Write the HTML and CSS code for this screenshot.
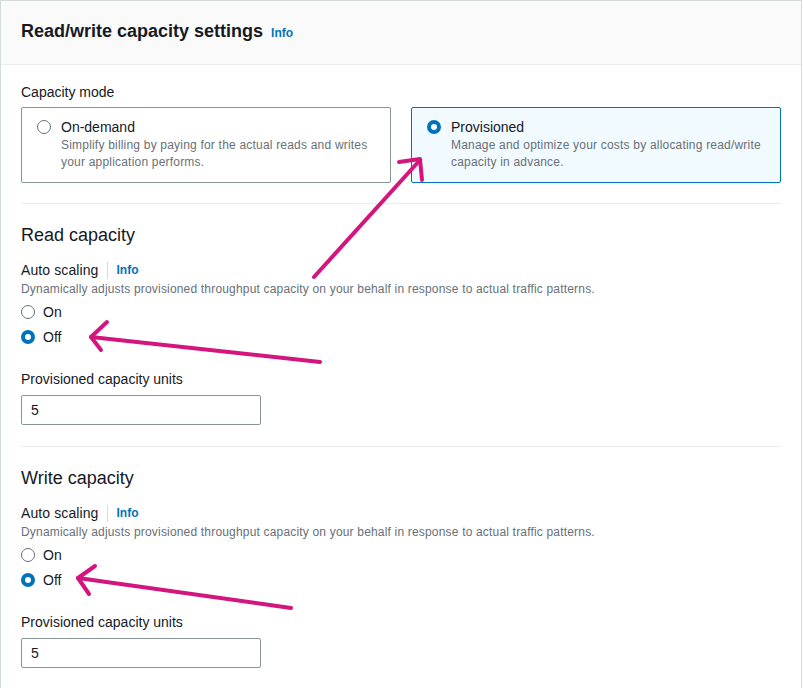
FILE: index.html
```html
<!DOCTYPE html>
<html lang="en">
<head>
<meta charset="utf-8">
<title>Read/write capacity settings</title>
<link rel="stylesheet" href="styles.css">
</head>
<body>
<div class="panel">
  <div class="panel-header">
    <h2 class="title">Read/write capacity settings</h2>
    <a class="info" href="#">Info</a>
  </div>
  <div class="panel-body">
    <div class="field-label">Capacity mode</div>
    <div class="tiles">
      <div class="tile">
        <span class="radio"></span>
        <div class="tile-text">
          <div class="tile-label">On-demand</div>
          <div class="tile-desc">Simplify billing by paying for the actual reads and writes your application performs.</div>
        </div>
      </div>
      <div class="tile tile-selected">
        <span class="radio radio-checked"></span>
        <div class="tile-text">
          <div class="tile-label">Provisioned</div>
          <div class="tile-desc">Manage and optimize your costs by allocating read/write capacity in advance.</div>
        </div>
      </div>
    </div>

    <div class="section">
      <h3 class="section-title">Read capacity</h3>
      <div class="label-row">
        <span class="label-text">Auto scaling</span>
        <span class="label-sep"></span>
        <a class="info" href="#">Info</a>
      </div>
      <div class="desc">Dynamically adjusts provisioned throughput capacity on your behalf in response to actual traffic patterns.</div>
      <div class="radio-group">
        <div class="radio-row"><span class="radio"></span><span>On</span></div>
        <div class="radio-row"><span class="radio radio-checked"></span><span>Off</span></div>
      </div>
      <div class="field-label units-label">Provisioned capacity units</div>
      <div class="input">5</div>
    </div>

    <div class="section">
      <h3 class="section-title">Write capacity</h3>
      <div class="label-row">
        <span class="label-text">Auto scaling</span>
        <span class="label-sep"></span>
        <a class="info" href="#">Info</a>
      </div>
      <div class="desc">Dynamically adjusts provisioned throughput capacity on your behalf in response to actual traffic patterns.</div>
      <div class="radio-group">
        <div class="radio-row"><span class="radio"></span><span>On</span></div>
        <div class="radio-row"><span class="radio radio-checked"></span><span>Off</span></div>
      </div>
      <div class="field-label units-label">Provisioned capacity units</div>
      <div class="input">5</div>
    </div>
  </div>
</div>

<svg class="annotations" width="803" height="688" viewBox="0 0 803 688" aria-hidden="true">
  <g fill="none" stroke="#d4157e" stroke-width="4" stroke-linecap="round" stroke-linejoin="round">
    <path d="M314 277 L420 160"/>
    <path d="M399 162 L420 159 L422 180"/>
    <path d="M320 362 L91 337"/>
    <path d="M107 322 L91 337 L101 350"/>
    <path d="M291 608 L78 578"/>
    <path d="M95 566 L78 578 L89 594"/>
  </g>
</svg>
</body>
</html>
```

FILE: styles.css
```css
* { box-sizing: border-box; }

body {
  margin: 0;
  background: #ffffff;
  font-family: "Liberation Sans", Arial, sans-serif;
  color: #16191f;
}

.panel {
  width: 802px;
  border: 1px solid #d5dbdb;
  border-bottom: none;
  background: #ffffff;
}

.panel-header {
  display: flex;
  align-items: baseline;
  gap: 8px;
  background: #fafafa;
  padding: 19px 20px 22px;
  border-bottom: 1px solid #eaeded;
}

.title {
  margin: 0;
  font-size: 18px;
  line-height: 22px;
  font-weight: 700;
}

.info {
  color: #0073bb;
  font-size: 12px;
  font-weight: 700;
  text-decoration: none;
}

.panel-body {
  padding: 16px 20px 40px;
}

.field-label {
  font-size: 14px;
  line-height: 22px;
}

.tiles {
  display: grid;
  grid-template-columns: 1fr 1fr;
  gap: 20px;
  margin-top: 4px;
}

.tile {
  display: flex;
  align-items: flex-start;
  gap: 10px;
  border: 1px solid #879596;
  border-radius: 2px;
  padding: 10px 15px 11px;
  height: 76px;
}

.tile-selected {
  border-color: #0073bb;
  background: #f1faff;
}

.tile-label {
  font-size: 14px;
  line-height: 20px;
  margin-top: -1px;
}

.tile-desc {
  font-size: 12px;
  line-height: 17px;
  letter-spacing: 0.2px;
  color: #687078;
}

.radio {
  flex: none;
  width: 14px;
  height: 14px;
  border-radius: 50%;
  border: 1.5px solid #687078;
  background: #ffffff;
  margin-top: 2px;
}

.radio-checked {
  border: 4px solid #0073bb;
}

.section {
  border-top: 1px solid #eaeded;
  margin-top: 20px;
  padding-top: 20px;
}

.section + .section {
  margin-top: 21px;
}

.section-title {
  margin: 0;
  font-size: 18px;
  line-height: 22px;
  font-weight: 400;
}

.label-row {
  display: flex;
  align-items: center;
  margin-top: 13px;
  height: 22px;
}

.label-text {
  font-size: 14px;
  letter-spacing: 0.1px;
}

.label-sep {
  width: 1px;
  height: 17px;
  background: #d5dbdb;
  margin: 0 8px 0 9px;
}

.desc {
  font-size: 12px;
  line-height: 16px;
  letter-spacing: 0.18px;
  color: #687078;
}

.radio-group {
  display: flex;
  flex-direction: column;
  gap: 1px;
  margin-top: 3px;
}

.radio-row {
  display: flex;
  align-items: center;
  gap: 8px;
  height: 24px;
  font-size: 14px;
}

.radio-row .radio {
  margin-top: 0;
}

.units-label {
  margin-top: 19px;
}

.input {
  width: 240px;
  height: 30px;
  margin-top: 5px;
  border: 1px solid #879596;
  border-radius: 2px;
  padding: 0 9px;
  font-size: 14px;
  line-height: 28px;
}

.annotations {
  position: absolute;
  left: 0;
  top: 0;
  pointer-events: none;
}
```
